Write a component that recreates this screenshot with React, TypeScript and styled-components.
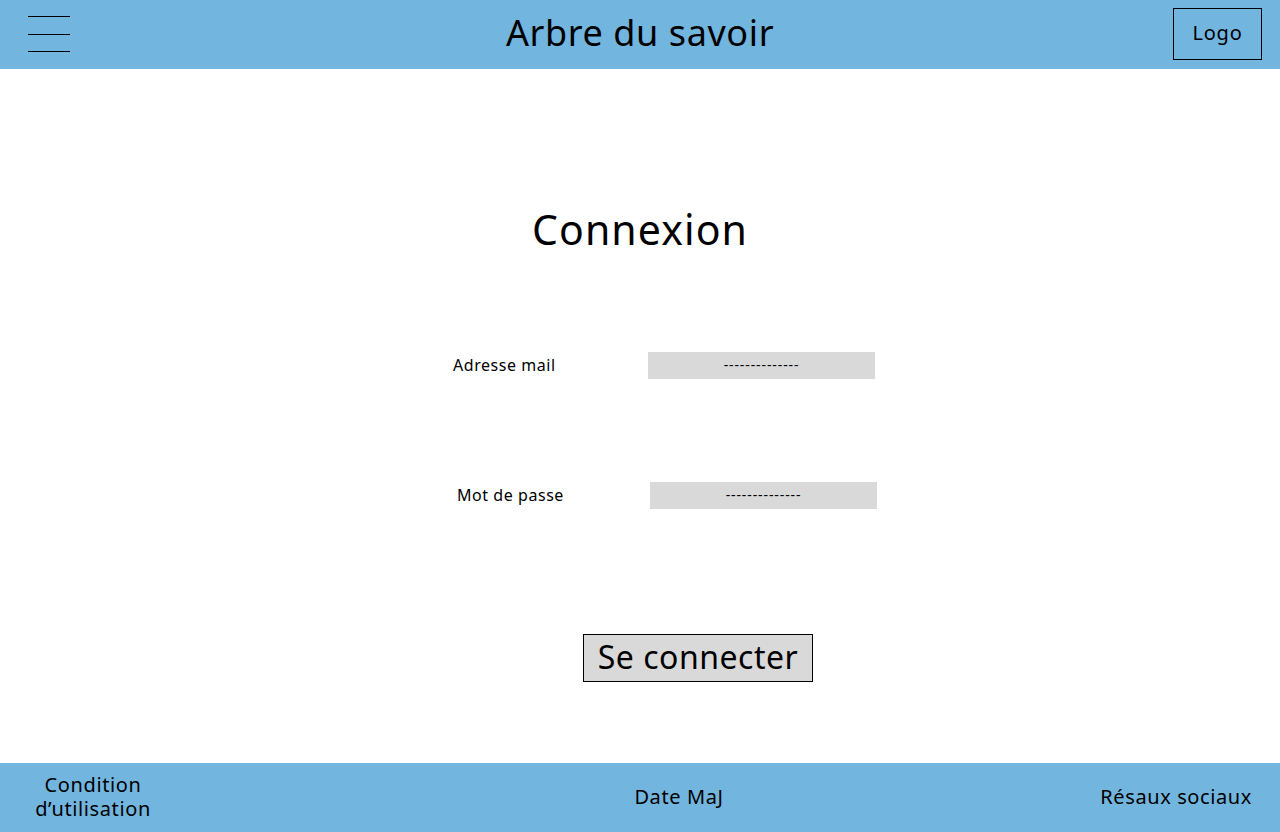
import React from "react";
import styled, { createGlobalStyle } from "styled-components";

const Global = createGlobalStyle`
  html, body { margin: 0; padding: 0; }
  body {
    font-family: "Noto Sans", "Open Sans", sans-serif;
    color: #000;
    background: #fff;
  }
  * { box-sizing: border-box; }
`;

const Page = styled.div`
  width: 1280px;
  height: 832px;
  display: flex;
  flex-direction: column;
  overflow: hidden;
`;

const Header = styled.header`
  height: 69px;
  background: #72b5de;
  display: grid;
  grid-template-columns: 186px 1fr 186px;
  align-items: center;
`;

const Burger = styled.button`
  width: 42px;
  height: 36px;
  margin-left: 28px;
  padding: 0;
  border: none;
  background: transparent;
  display: flex;
  flex-direction: column;
  justify-content: space-between;
  align-self: start;
  margin-top: 16px;
  cursor: pointer;
`;

const BurgerLine = styled.span`
  display: block;
  height: 1px;
  width: 100%;
  background: #000;
`;

const SiteTitle = styled.h1`
  margin: 0 0 4px;
  text-align: center;
  font-weight: 400;
  font-size: 36px;
  line-height: 1;
  letter-spacing: 0.6px;
`;

const LogoBox = styled.div`
  justify-self: end;
  margin-right: 18px;
  margin-bottom: 2px;
  width: 89px;
  height: 52px;
  border: 1px solid #000;
  display: flex;
  align-items: center;
  justify-content: center;
  font-size: 20px;
  letter-spacing: 0.8px;
  padding-bottom: 2px;
`;

const Main = styled.main`
  flex: 1;
  display: flex;
  flex-direction: column;
  align-items: center;
  padding-top: 136px;
`;

const Heading = styled.h2`
  margin: 0;
  font-weight: 400;
  font-size: 41px;
  line-height: 48px;
  letter-spacing: 1.1px;
`;

const Form = styled.form`
  margin-top: 99px;
  padding-left: 50px;
  width: 474px;
  display: flex;
  flex-direction: column;
  gap: 103px;
`;

const Row = styled.div<{ $shift: number }>`
  display: grid;
  grid-template-columns: 195px 227px;
  align-items: center;
  height: 27px;
  margin-left: ${(p) => p.$shift}px;
`;

const Label = styled.label<{ $pad: number }>`
  font-size: 16px;
  padding-left: ${(p) => p.$pad}px;
  padding-bottom: 2px;
  letter-spacing: 0.55px;
`;

const Field = styled.div`
  height: 27px;
  background: #d9d9d9;
  display: flex;
  align-items: center;
  justify-content: center;
  font-size: 14px;
  letter-spacing: 0.9px;
  padding-bottom: 2px;
`;

const Submit = styled.button`
  margin-top: 125px;
  margin-left: 116px;
  width: 230px;
  height: 48px;
  background: #d9d9d9;
  border: 1px solid #000;
  border-radius: 0;
  padding: 0 0 3px;
  font-family: inherit;
  font-size: 32px;
  line-height: 1;
  color: #000;
  letter-spacing: 0.5px;
`;

const Footer = styled.footer`
  height: 69px;
  background: #72b5de;
  display: grid;
  grid-template-columns: 186px 1fr 186px;
  align-items: center;
  font-size: 20px;
`;

const FootItem = styled.div<{ $align: "left" | "center" | "right"; $pad?: string }>`
  text-align: ${(p) => p.$align};
  padding: ${(p) => p.$pad ?? "0"};
  line-height: 24px;
  letter-spacing: 0.6px;
`;

const FootLine = styled.span`
  display: block;
  height: 24px;
`;

export default function App() {
  return (
    <>
      <Global />
      <Page>
        <Header>
          <Burger aria-label="Menu">
            <BurgerLine />
            <BurgerLine />
            <BurgerLine />
          </Burger>
          <SiteTitle>Arbre du savoir</SiteTitle>
          <LogoBox>Logo</LogoBox>
        </Header>
        <Main>
          <Heading>Connexion</Heading>
          <Form onSubmit={(e) => e.preventDefault()}>
            <Row $shift={0}>
              <Label $pad={0}>Adresse mail</Label>
              <Field>--------------</Field>
            </Row>
            <Row $shift={2}>
              <Label $pad={2}>Mot de passe</Label>
              <Field>--------------</Field>
            </Row>
          </Form>
          <Submit type="button">Se connecter</Submit>
        </Main>
        <Footer>
          <FootItem $align="center" $pad="0 0 2px">
            <FootLine>Condition</FootLine>
            <FootLine>d’utilisation</FootLine>
          </FootItem>
          <FootItem $align="center" $pad="0 0 2px 78px">
            Date MaJ
          </FootItem>
          <FootItem $align="right" $pad="0 28px 2px 0">
            Résaux sociaux
          </FootItem>
        </Footer>
      </Page>
    </>
  );
}
